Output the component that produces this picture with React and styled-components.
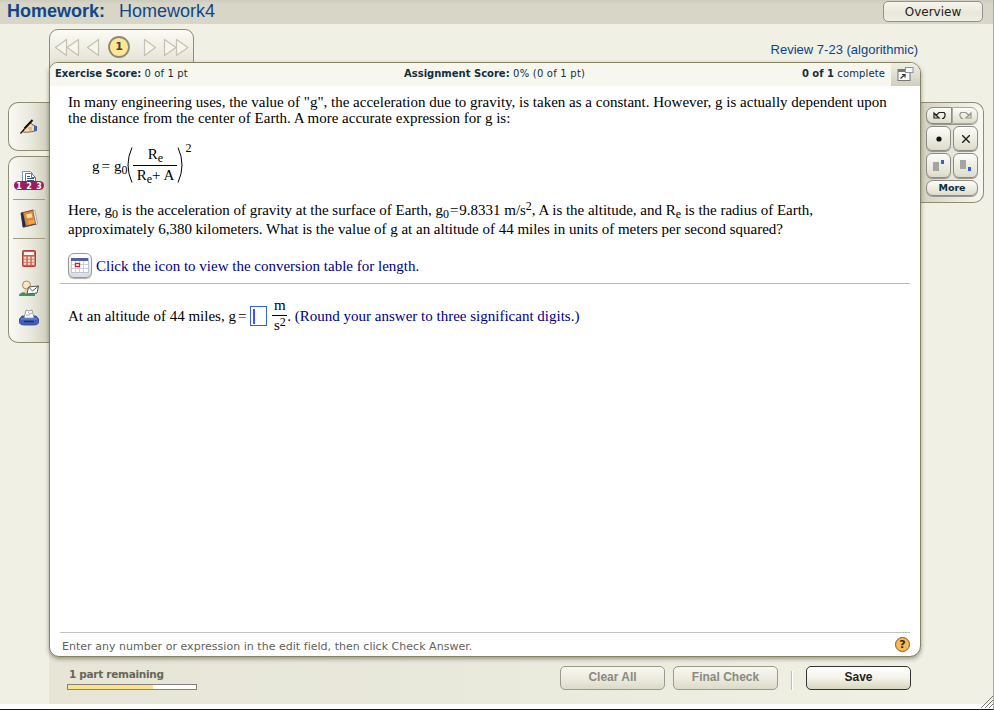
import React from 'react';
import styled, { createGlobalStyle, css } from 'styled-components';

const GlobalStyle = createGlobalStyle`
  * { box-sizing: border-box; }
  html, body { margin: 0; padding: 0; overflow: hidden; background: #fff; }
  body { font-family: "DejaVu Sans", Verdana, sans-serif; color: #12303c; }
  svg { display: block; flex: none; }
`;

const Window = styled.div`
  width: 994px;
  height: 710px;
  display: flex;
  flex-direction: column;
  background: #fff;
  border-right: 1px solid #a9a9a6;
  border-bottom: 1px solid #16162a;
`;

const Header = styled.header`
  height: 24px;
  flex: none;
  display: flex;
  align-items: flex-start;
  justify-content: space-between;
  padding: 0 10px 0 7px;
  background: linear-gradient(#cccbbd, #d8d6c7 4px);
`;

const Title = styled.h1`
  margin: 0;
  font: 18px/22px "Liberation Sans", Arial, sans-serif;
  color: #10468a;
  display: flex;
  gap: 14px;
`;

const OverviewButton = styled.button`
  width: 100px;
  height: 21px;
  margin-top: 1px;
  padding: 0;
  border: 1px solid #929294;
  border-radius: 5px;
  background: linear-gradient(#f6f5ec, #e9e7d9 60%, #f1f0e5);
  font: 12px/20px "DejaVu Sans", Verdana, sans-serif;
  color: #222;
`;

const Workspace = styled.div`
  height: 680px;
  flex: none;
  display: grid;
  grid-template-columns: 49px 872px 1fr;
  background: #f0f0e4;
`;

const LeftRail = styled.aside`
  padding: 78px 0 0 8px;
  display: flex;
  flex-direction: column;
  gap: 5px;
`;

const ToolBox = styled.div`
  height: ${(p) => p.$height}px;
  padding-top: ${(p) => p.$top}px;
  display: flex;
  flex-direction: column;
  align-items: center;
  border: 1px solid #8e8c72;
  border-right: 0;
  border-radius: 10px 0 0 10px;
  background: linear-gradient(90deg, #fafaf6, #e9e8dc 55%, #cfcebd);
`;

const ToolSlot = styled.div`
  height: ${(p) => p.$height}px;
  width: 32px;
  display: flex;
  align-items: center;
  justify-content: center;
  border-bottom: ${(p) => (p.$ruled ? '1px solid #a39d80' : '0')};
`;

const Center = styled.main`
  display: flex;
  flex-direction: column;
  background: linear-gradient(90deg, #e6e5d6, #e9e9dc 50%, #f0f0e4) 0 100% / 100% 60px no-repeat;
`;

const TopRow = styled.div`
  height: 38px;
  padding: 5px 2px 0 0;
  display: flex;
  justify-content: space-between;
`;

const Pager = styled.nav`
  width: 145px;
  height: 42px;
  display: flex;
  justify-content: center;
  border: 1px solid #8e8c72;
  border-radius: 9px 9px 0 0;
  background: linear-gradient(#fbfaf5, #e8e6d9 30px);
`;

const Reference = styled.div`
  margin: 13px 1px 0 0;
  font: 13px/16px "Liberation Sans", Arial, sans-serif;
  color: #10428a;
`;

const Panel = styled.section`
  height: 595px;
  flex: none;
  position: relative;
  overflow: hidden;
  display: flex;
  flex-direction: column;
  border: 1px solid #86845f;
  border-radius: 9px 11px 11px 10px;
  background: #fff;
  box-shadow: 0 2px 4px rgba(70, 70, 50, 0.5);
`;

const ScoreBar = styled.div`
  height: 23px;
  flex: none;
  display: grid;
  grid-template-columns: 349px 1fr auto 35px;
  padding-left: 5px;
  background: #f7f7ef;
  font-size: 10px;
  line-height: 21px;
  white-space: pre;
`;

const Expand = styled.div`
  margin-left: 6px;
  width: 29px;
  height: 23px;
  padding: 4px 0 0 6px;
  background: linear-gradient(#f0efe4, #d0cfbd);
`;

const Score = styled.div`
  letter-spacing: ${(p) => p.$track || 0}px;
  b { letter-spacing: 0; }
`;

const Problem = styled.div`
  height: 198px;
  flex: none;
  margin: 0 10px;
  padding: 8px 8px 0;
  border-bottom: 1px solid #b9b9b9;
  font: 15px/16px "Liberation Serif", "Times New Roman", serif;
  color: #000;
`;

const Line = styled.div`
  height: ${(p) => p.$height || 16}px;
  line-height: ${(p) => p.$height || 16}px;
  white-space: pre;
  letter-spacing: ${(p) => p.$track || 0}px;
`;

const Sub = styled.span`
  display: inline-block;
  font-size: 12px;
  line-height: 1;
  transform: translateY(${(p) => p.$shift ?? 3}px);
`;

const Equals = styled.span`
  margin: 0 ${(p) => p.$after ?? 2}px 0 ${(p) => p.$before ?? 2}px;
`;

const Formula = styled.div`
  height: 75px;
  padding: 3px 0 0 24px;
  display: flex;
  align-items: center;
  white-space: pre;
`;

const FormulaLead = styled.span`
  padding-top: 2px;
`;

const Fraction = styled.div`
  width: ${(p) => p.$width}px;
  display: flex;
  flex-direction: column;
  align-items: center;
  color: #000;
`;

const Numerator = styled.div`
  width: 100%;
  height: ${(p) => p.$height || 21}px;
  text-align: center;
  border-bottom: 1px solid #000;
  line-height: 18px;
`;

const Denominator = styled.div`
  height: 20px;
  line-height: 19px;
`;

const Exponent = styled.span`
  font-size: 12px;
  align-self: flex-start;
  margin: 11px 0 0 2px;
`;

const LinkRow = styled.div`
  margin-top: 14px;
  display: flex;
  align-items: center;
  gap: 4px;
  color: #000080;
`;

const TableButton = styled.button`
  width: 24px;
  height: 25px;
  padding: 0 0 0 2px;
  border: 1px solid #999;
  border-radius: 6px;
  background: linear-gradient(#fff, #dcdcdc);
  box-shadow: 0 1px 1px #aaa;
`;

const AnswerRow = styled.div`
  margin: 9px 18px 0;
  height: 46px;
  display: flex;
  align-items: center;
  white-space: pre;
  font: 15px/18px "Liberation Serif", "Times New Roman", serif;
  color: #000;
`;

const AnswerBox = styled.div`
  width: 17px;
  height: 20px;
  margin: 0 5px 0 3px;
  padding: 2px 0 0 2px;
  border: 1px solid #3366cc;
  background: #fff;
`;

const Caret = styled.div`
  width: 2px;
  height: 15px;
  background: #4b4bff;
`;

const Note = styled.span`
  color: #000080;
`;

const Hint = styled.div`
  height: 24px;
  flex: none;
  margin: auto 10px 0;
  padding: 0 0 0 2px;
  display: flex;
  align-items: center;
  justify-content: space-between;
  border-top: 1px solid #c2c2c2;
  font-size: 11px;
  color: #62625c;
`;

const HintText = styled.span`
  padding-top: 3px;
  letter-spacing: 0.03px;
`;

const Help = styled.div`
  width: 15px;
  height: 15px;
  border-radius: 50%;
  border: 1px solid #7b5a28;
  background: #f9bb51;
  color: #332613;
  text-align: center;
  font: bold 11px/13px "DejaVu Sans", sans-serif;
`;

const Footer = styled.footer`
  height: 47px;
  display: flex;
  padding: 9px 10px 0 18px;
`;

const Progress = styled.div`
  width: 130px;
  margin-right: auto;
  font-weight: bold;
  font-size: 11px;
  line-height: 17px;
  color: #676759;
`;

const ProgressLabel = styled.div`
  height: 18px;
  padding-left: 2px;
  white-space: nowrap;
  font-size: 10.5px;
  letter-spacing: -0.3px;
`;

const Track = styled.div`
  height: 6px;
  border: 1px solid #82827a;
  background: linear-gradient(90deg, #ffe38b 66.6%, #fff 66.6%);
`;

const Action = styled.button`
  width: 105px;
  height: 24px;
  padding: 0 0 2px;
  border: 1px solid ${(p) => (p.$active ? '#343434' : '#9a9a91')};
  border-radius: 5px;
  background: ${(p) =>
    p.$active ? 'linear-gradient(#fff, #f4f3e9 50%, #d7d6bf)' : 'linear-gradient(#f8f8f2, #ebeade 55%, #dcdbc7)'};
  font: bold 12px/20px "Liberation Sans", Arial, sans-serif;
  color: ${(p) => (p.$active ? '#222' : '#8a8a7e')};
  margin-right: ${(p) => p.$gap || 0}px;
`;

const Divider = styled.div`
  width: 2px;
  height: 19px;
  margin: 5px 13px 0 0;
  border-left: 1px solid #bdbdb2;
  border-right: 1px solid #fff;
`;

const RightRail = styled.aside`
  padding-top: 78px;
  display: flex;
  flex-direction: column;
  justify-content: space-between;
`;

const Palette = styled.div`
  width: 63px;
  height: 101px;
  padding: 4px 0 0 5px;
  display: grid;
  grid-template-columns: 25px 25px;
  grid-template-rows: 17px 25px 25px 16px;
  gap: 2px;
  border: 1px solid #8e8c72;
  border-left: 0;
  border-radius: 0 10px 10px 0;
  background: linear-gradient(90deg, #d2d1c1, #f8f8f3);
`;

const Key = styled.button`
  padding: 0;
  display: flex;
  align-items: center;
  justify-content: center;
  border: 1px solid #8c8c85;
  border-radius: 6px;
  background: linear-gradient(#fdfdf9, #dddccb);
  box-shadow: 0 1px 0 #99998e;
  font: bold 9.5px/14px "DejaVu Sans", Verdana, sans-serif;
  color: #092f45;
  ${(p) => p.$half === 'left' && css`border-radius: 7px 0 0 7px; width: 26px;`}
  ${(p) => p.$half === 'right' && css`border-radius: 0 7px 7px 0; margin-left: -1px; border-color: #aaa99e;`}
  ${(p) => p.$wide && css`grid-column: span 2; border-radius: 7px;`}
`;

const Grip = styled.div`
  align-self: flex-end;
  margin-bottom: -4px;
`;

const PagerArt = () => (
  <svg width="143" height="36" viewBox="0 0 143 36" fill="#f6f5ee" stroke="#c5c2b1" strokeWidth="1.200" strokeLinejoin="round">
    <path d="M16.500 9.500v16L5.500 17.500zM28.500 9.500v16L17 17.500zM48.500 9.500v16L37.500 17.500z" />
    <path d="M94.500 9.500v16l11-8zM114.500 9.500v16l11.500-8zM126.500 9.500v16l11.500-8z" />
    <circle cx="69" cy="17" r="10" fill="#ffe794" stroke="#8d8a72" strokeWidth="1.800" />
    <text x="69" y="20" textAnchor="middle" fontFamily="DejaVu Sans" fontWeight="bold" fontSize="11" fill="#4a4635" stroke="none">1</text>
  </svg>
);

const PenIcon = () => (
  <svg width="18" height="16" viewBox="0 0 18 16">
    <path d="M2.500 12.500L6 7l3-3h2l1 1.500 2.500 1v5.500l-3 .8-4 .4H4z" fill="#f6d9b4" stroke="#5b4430" strokeWidth=".8" />
    <path d="M14 6.500l3 .5v5l-3 .5z" fill="#3f63a8" />
    <path d="M4.500 9.500L12.500 1" stroke="#111" strokeWidth="2" />
    <path d="M8 9h4M9 11h3" stroke="#b78b5e" strokeWidth=".8" />
    <path d="M.5 14.500l4-4.500" stroke="#111" strokeWidth="1.300" />
  </svg>
);

const PagesIcon = () => (
  <svg width="30" height="20" viewBox="0 0 30 20">
    <path d="M8.500 12V.5h8l2 2V12z" fill="#fff" stroke="#7893bd" />
    <path d="M11.500 12V2.500h6l4 4V12z" fill="#fff" stroke="#5877ad" />
    <path d="M17.500 2.500v4h4" fill="none" stroke="#5877ad" />
    <path d="M13 5.500h3M13 7.500h7M13 9.500h7" stroke="#35558c" />
    <rect x="0" y="10" width="30" height="9" rx="4.500" fill="#9b1b5c" />
    <g fill="#fff" fontFamily="DejaVu Sans" fontWeight="bold" fontSize="8" textAnchor="middle">
      <text x="5" y="17.500">1</text><text x="15" y="17.500">2</text><text x="25" y="17.500">3</text>
    </g>
  </svg>
);

const BookIcon = () => (
  <svg width="18" height="20" viewBox="0 0 18 20">
    <path d="M1 4l12-3 3 14-13 3z" fill="#d98838" stroke="#5b3618" strokeWidth=".8" />
    <path d="M1 4l2-.5 3 14-3 1z" fill="#1c2c50" />
    <path d="M13 1l2 .5 2.500 13L16 16z" fill="#f2efe3" stroke="#777" strokeWidth=".5" />
    <path d="M6 5.500l5.500-1.200 1 4-5.500 1.200z" fill="#f9df9d" />
    <path d="M8 12l6-1.500.8 3.500-6 1.500z" fill="#f5a742" />
    <path d="M4 18l12-3" stroke="#354d7d" />
  </svg>
);

const CalculatorIcon = () => (
  <svg width="14" height="17" viewBox="0 0 14 17">
    <rect x=".5" y=".5" width="13" height="16" rx="1" fill="#c65e55" stroke="#b03f3f" />
    <rect x="2" y="2" width="10" height="3" fill="#fdf6ee" />
    <g fill="#ffe3c4">
      {[6, 9, 12].map((y) => [2, 6, 10].map((x) => <rect key={`${x}-${y}`} x={x - 0.3} y={y + 0.6} width="2.700" height="2.200" />))}
    </g>
  </svg>
);

const ContactIcon = () => (
  <svg width="22" height="17" viewBox="0 0 22 17">
    <path d="M1 16c0-3 3-4 7-4l9 2v2z" fill="#399469" />
    <path d="M7 8h3v4l-2 2-2-2z" fill="#efd3a4" />
    <circle cx="8.500" cy="5" r="4" fill="#fbe7be" stroke="#a58a60" />
    <path d="M10.500 7l10-1-1.500 7-10 1z" fill="#fff" stroke="#555" />
    <path d="M10.500 7l4 4 6-5" fill="none" stroke="#555" />
  </svg>
);

const PrinterIcon = () => (
  <svg width="20" height="17" viewBox="0 0 20 17">
    <path d="M3 7l-2.500 3v3q0 3 5 3h9q5 0 5-3v-3L17 7z" fill="#3f60bd" stroke="#293f8d" strokeWidth=".8" />
    <path d="M5 9L7 1l3 1 3-1 2 8z" fill="#fff" stroke="#888" strokeWidth=".8" />
    <path d="M9 3l2 2 2-1M7 6h4" stroke="#aaa" fill="none" />
    <path d="M5 12.500h10" stroke="#1c2e70" strokeWidth="1.500" />
    <path d="M2 10h16" stroke="#7d98e0" strokeWidth=".8" />
  </svg>
);

const ExpandIcon = () => (
  <svg width="17" height="15" viewBox="0 0 17 15">
    <rect x="1" y="2.500" width="12" height="11" fill="#fafaf6" stroke="#777" />
    <path d="M1 4h12" stroke="#777" strokeWidth="2" />
    <rect x="8.500" y=".5" width="7.500" height="5" fill="#f7f7f5" stroke="#8890a5" />
    <path d="M3.500 11.500L8 7.500M5 7.500h3v3" fill="none" stroke="#333" strokeWidth="1.200" />
  </svg>
);

const TableIcon = () => (
  <svg width="18" height="15" viewBox="0 0 18 15">
    <rect x=".5" y=".5" width="17" height="14" fill="#fff" stroke="#b9c4da" />
    <path d="M4.500 3v11M8.500 3v11M12.500 3v11M1 6.500h16M1 10.500h16" stroke="#ccd2dc" />
    <path d="M0 1.500h17" stroke="#5361a4" strokeWidth="3" />
    <rect x="4.500" y="5.500" width="4" height="3" fill="#fff" stroke="#e61a1a" strokeWidth="1.300" />
  </svg>
);

const Paren = ({ right }) => (
  <svg width="6" height="36" viewBox="0 0 6 36" fill="none" stroke="#000">
    <path d={right ? 'M1 .5Q9 18 1 35.500' : 'M5 .5Q-3 18 5 35.500'} />
  </svg>
);

const TurnIcon = ({ redo }) => (
  <svg width="13" height="9" viewBox="0 0 13 9" fill="none" stroke={redo ? '#96968e' : '#222'} strokeWidth="1.200">
    {redo
      ? <path d="M4 7.500H2.500Q-.5 4 2 1.500H7L10.500 5M12 2v5H7z" />
      : <path d="M9 7.500h1.500Q13.500 4 11 1.500H6L2.500 5M1 2v5H6z" />}
  </svg>
);

const ScriptIcon = ({ low }) => (
  <svg width="13" height="14" viewBox="0 0 13 14" shapeRendering="crispEdges">
    <rect x="1" y={low ? 1 : 3} width="6" height="9" fill="#a4a4a4" />
    <rect x="9" y={low ? 8 : 1} width="3" height="4" fill="#3164cf" />
  </svg>
);

export default function App() {
  return (
    <>
      <GlobalStyle />
      <Window>
        <Header>
          <Title><b>Homework:</b><span>Homework4</span></Title>
          <OverviewButton>Overview</OverviewButton>
        </Header>
        <Workspace>
          <LeftRail>
            <ToolBox $height={49} $top={0}><ToolSlot $height={48}><PenIcon /></ToolSlot></ToolBox>
            <ToolBox $height={187} $top={5}>
              <ToolSlot $height={38} $ruled><PagesIcon /></ToolSlot>
              <ToolSlot $height={39} $ruled><BookIcon /></ToolSlot>
              <ToolSlot $height={39}><CalculatorIcon /></ToolSlot>
              <ToolSlot $height={20}><ContactIcon /></ToolSlot>
              <ToolSlot $height={39}><PrinterIcon /></ToolSlot>
            </ToolBox>
          </LeftRail>
          <Center>
            <TopRow>
              <Pager><PagerArt /></Pager>
              <Reference>Review 7-23 (algorithmic)</Reference>
            </TopRow>
            <Panel>
              <ScoreBar>
                <Score $track={0.12}><b>Exercise Score:</b> 0 of 1 pt</Score>
                <Score $track={0.22}><b>Assignment Score:</b> 0% (0 of 1 pt)</Score>
                <Score $track={0.12}><b>0 of 1</b> complete</Score>
                <Expand><ExpandIcon /></Expand>
              </ScoreBar>
              <Problem>
                <Line>In many engineering uses, the value of "g", the acceleration due to gravity, is taken as a constant. However, g is actually dependent upon</Line>
                <Line>the distance from the center of Earth. A more accurate expression for g is:</Line>
                <Formula>
                  <FormulaLead>g<Equals $after={4}>=</Equals>g<Sub>0</Sub></FormulaLead>
                  <Paren />
                  <Fraction $width={44}>
                    <Numerator>R<Sub>e</Sub></Numerator>
                    <Denominator>R<Sub>e</Sub>+ A</Denominator>
                  </Fraction>
                  <Paren right />
                  <Exponent>2</Exponent>
                </Formula>
                <Line $height={19} $track={-0.015}>Here, g<Sub>0</Sub> is the acceleration of gravity at the surface of Earth, g<Sub>0</Sub><Equals $before={1} $after={1}>=</Equals>9.8331 m/s<Sub $shift={-5}>2</Sub>, A is the altitude, and R<Sub>e</Sub> is the radius of Earth,</Line>
                <Line $height={19} $track={-0.014}>approximately 6,380 kilometers. What is the value of g at an altitude of 44 miles in units of meters per second squared?</Line>
                <LinkRow>
                  <TableButton><TableIcon /></TableButton>
                  <Line>Click the icon to view the conversion table for length.</Line>
                </LinkRow>
              </Problem>
              <AnswerRow>
                <span>At an altitude of 44 miles, g<Equals $after={1}>=</Equals></span>
                <AnswerBox><Caret /></AnswerBox>
                <Fraction $width={15}>
                  <Numerator $height={20}>m</Numerator>
                  <Denominator>s<Sub $shift={-4}>2</Sub></Denominator>
                </Fraction>
                <span>. </span>
                <Note>(Round your answer to three significant digits.)</Note>
              </AnswerRow>
              <Hint>
                <HintText>Enter any number or expression in the edit field, then click Check Answer.</HintText>
                <Help>?</Help>
              </Hint>
            </Panel>
            <Footer>
              <Progress>
                <ProgressLabel>1 part remaining</ProgressLabel>
                <Track />
              </Progress>
              <Action $gap={8}>Clear All</Action>
              <Action $gap={13}>Final Check</Action>
              <Divider />
              <Action $active>Save</Action>
            </Footer>
          </Center>
          <RightRail>
            <Palette>
              <Key $half="left"><TurnIcon /></Key>
              <Key $half="right"><TurnIcon redo /></Key>
              <Key><svg width="6" height="6"><circle cx="3" cy="3" r="2.600" fill="#111" /></svg></Key>
              <Key><svg width="8" height="8"><path d="M0 0l8 8M8 0L0 8" stroke="#222" strokeWidth="1.400" /></svg></Key>
              <Key><ScriptIcon /></Key>
              <Key><ScriptIcon low /></Key>
              <Key $wide>More</Key>
            </Palette>
            <Grip>
              <svg width="12" height="12" viewBox="0 0 12 12" stroke="#777"><path d="M0 12L12 0M4 12l8-8M8 12l4-4" /></svg>
            </Grip>
          </RightRail>
        </Workspace>
      </Window>
    </>
  );
}
